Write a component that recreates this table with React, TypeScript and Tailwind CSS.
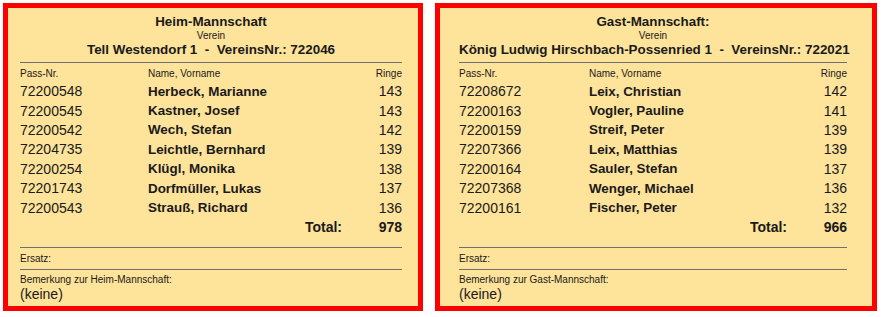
type Player = { pass: string; name: string; ringe: number }

interface TeamPanelProps {
  title: string
  club: string
  clubNr: string
  players: Player[]
  total: number
  remarkLabel: string
  className?: string
  padClass: string
}

const HEIM: Player[] = [
  { pass: '72200548', name: 'Herbeck, Marianne', ringe: 143 },
  { pass: '72200545', name: 'Kastner, Josef', ringe: 143 },
  { pass: '72200542', name: 'Wech, Stefan', ringe: 142 },
  { pass: '72204735', name: 'Leichtle, Bernhard', ringe: 139 },
  { pass: '72200254', name: 'Klügl, Monika', ringe: 138 },
  { pass: '72201743', name: 'Dorfmüller, Lukas', ringe: 137 },
  { pass: '72200543', name: 'Strauß, Richard', ringe: 136 },
]

const GAST: Player[] = [
  { pass: '72208672', name: 'Leix, Christian', ringe: 142 },
  { pass: '72200163', name: 'Vogler, Pauline', ringe: 141 },
  { pass: '72200159', name: 'Streif, Peter', ringe: 139 },
  { pass: '72207366', name: 'Leix, Matthias', ringe: 139 },
  { pass: '72200164', name: 'Sauler, Stefan', ringe: 137 },
  { pass: '72207368', name: 'Wenger, Michael', ringe: 136 },
  { pass: '72200161', name: 'Fischer, Peter', ringe: 132 },
]

function TeamPanel({ title, club, clubNr, players, total, remarkLabel, className, padClass }: TeamPanelProps) {
  return (
    <div className={`h-[308px] border-[5px] border-[#ff0000] bg-[#fee39a] text-[#1a1a1a] ${className ?? ''}`}>
      <div className={`flex flex-col pt-[6px] ${padClass}`}>
        {/* Header */}
        <div className="text-center text-[13.4px] font-bold leading-[16px]">{title}</div>
        <div className="text-center text-[10px] leading-[11px]">Verein</div>
        <div className="whitespace-nowrap text-center text-[13.4px] font-bold leading-[17px]">
          {club}&nbsp; - &nbsp;VereinsNr.: {clubNr}
        </div>
        <div className="mt-[4px] h-px bg-[#6f6f6f]" />

        {/* Column labels */}
        <div className="mt-[5px] flex text-[10px] leading-[12px]">
          <div className="w-[33.5%]">Pass-Nr.</div>
          <div className="flex-1">Name, Vorname</div>
          <div className="w-[60px] text-right">Ringe</div>
        </div>

        {/* Players */}
        <div className="mt-[2px]">
          {players.map((p) => (
            <div key={p.pass} className="flex h-[19.4px] items-center text-[14px]">
              <div className="w-[33.5%]">{p.pass}</div>
              <div className="flex-1 text-[13.4px] font-bold">{p.name}</div>
              <div className="w-[60px] text-right">{p.ringe}</div>
            </div>
          ))}
          <div className="flex h-[19.4px] items-center justify-end text-[14px] font-bold">
            <div>Total:</div>
            <div className="w-[60px] text-right">{total}</div>
          </div>
        </div>

        {/* Ersatz / Bemerkung */}
        <div className="mt-[10px] h-px bg-[#6f6f6f]" />
        <div className="pb-[4px] pt-[5px] text-[10px] leading-[12px]">Ersatz:</div>
        <div className="h-px bg-[#6f6f6f]" />
        <div className="mt-[4px] text-[10px] leading-[12px]">{remarkLabel}</div>
        <div className="text-[14px] leading-[16px]">(keine)</div>
      </div>
    </div>
  )
}

export default function App() {
  return (
    <div className="flex h-[317px] w-[881px] items-start gap-[12px] bg-white pl-[3px] pt-[3px] font-['Liberation_Sans',Arial,sans-serif]">
      <TeamPanel
        className="w-[420px]"
        padClass="pl-[12px] pr-[16px]"
        title="Heim-Mannschaft"
        club="Tell Westendorf 1"
        clubNr="722046"
        players={HEIM}
        total={978}
        remarkLabel="Bemerkung zur Heim-Mannschaft:"
      />
      <TeamPanel
        className="w-[442px]"
        padClass="pl-[19px] pr-[25px]"
        title="Gast-Mannschaft:"
        club="König Ludwig Hirschbach-Possenried 1"
        clubNr="722021"
        players={GAST}
        total={966}
        remarkLabel="Bemerkung zur Gast-Mannschaft:"
      />
    </div>
  )
}
